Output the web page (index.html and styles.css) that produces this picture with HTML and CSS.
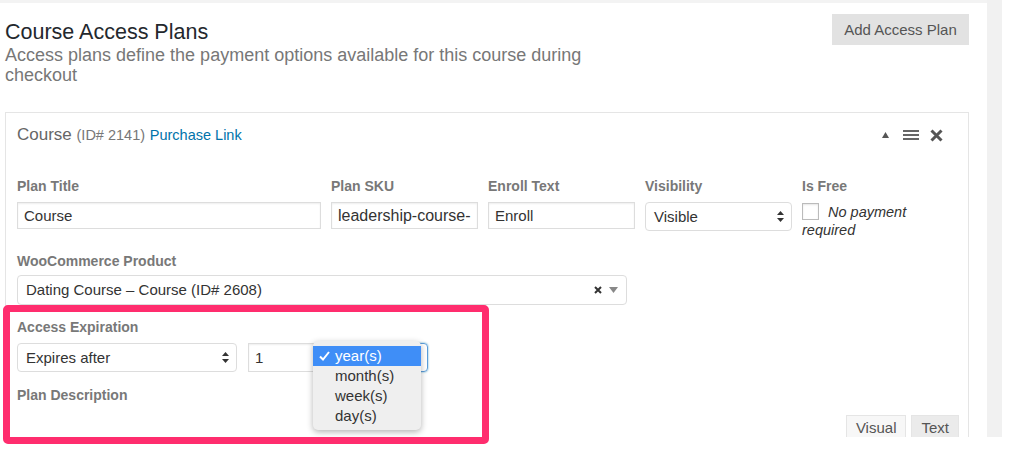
FILE: index.html
```html
<!DOCTYPE html>
<html lang="en">
<head>
    <meta charset="UTF-8">
    <meta name="viewport" content="width=device-width, initial-scale=1.0">
    <title>Course Access Plans</title>
    <link rel="stylesheet" href="styles.css">
</head>
<body>

<div class="page">
    <div class="main">
        <div class="top">
            <div class="intro">
                <h1>Course Access Plans</h1>
                <p>Access plans define the payment options available for this course during checkout</p>
            </div>
            <button class="add-btn">Add Access Plan</button>
        </div>

        <div class="plan">
            <div class="plan-head">
                <div class="plan-name">Course <small>(ID# 2141)</small> <a href="#">Purchase Link</a></div>
                <div class="plan-tools">
                    <svg class="tool-up" width="7" height="6" viewBox="0 0 7 6"><polygon points="0,6 3.5,0 7,6" fill="#555"/></svg>
                    <svg width="16" height="10" viewBox="0 0 16 10"><rect y="0" width="16" height="2" fill="#666"/><rect y="4" width="16" height="2" fill="#666"/><rect y="8" width="16" height="2" fill="#666"/></svg>
                    <svg width="13" height="13" viewBox="0 0 13 13"><path d="M1.5 1.5 L11.5 11.5 M11.5 1.5 L1.5 11.5" stroke="#555" stroke-width="3"/></svg>
                </div>
            </div>

            <div class="fields">
                <div class="field">
                    <label>Plan Title</label>
                    <div class="input">Course</div>
                </div>
                <div class="field">
                    <label>Plan SKU</label>
                    <div class="input sku">leadership-course-</div>
                </div>
                <div class="field">
                    <label>Enroll Text</label>
                    <div class="input">Enroll</div>
                </div>
                <div class="field">
                    <label>Visibility</label>
                    <div class="select">Visible
                        <svg class="updown" width="7" height="11" viewBox="0 0 7 11"><polygon points="0,4 3.5,0 7,4" fill="#333"/><polygon points="0,7 3.5,11 7,7" fill="#333"/></svg>
                    </div>
                </div>
                <div class="field">
                    <label>Is Free</label>
                    <div class="free"><span class="checkbox"></span><em>No payment required</em></div>
                </div>
            </div>

            <div class="field field-product">
                <label>WooCommerce Product</label>
                <div class="select product">Dating Course – Course (ID# 2608)
                    <span class="product-icons">
                        <svg width="8" height="8" viewBox="0 0 8 8"><path d="M1 1 L7 7 M7 1 L1 7" stroke="#333" stroke-width="2"/></svg>
                        <svg width="9" height="6" viewBox="0 0 9 6"><polygon points="0,0 9,0 4.5,6" fill="#888"/></svg>
                    </span>
                </div>
            </div>

            <div class="field field-expire">
                <label>Access Expiration</label>
                <div class="expire-row">
                    <div class="select expire-type">Expires after
                        <svg class="updown" width="7" height="11" viewBox="0 0 7 11"><polygon points="0,4 3.5,0 7,4" fill="#333"/><polygon points="0,7 3.5,11 7,7" fill="#333"/></svg>
                    </div>
                    <div class="input expire-num">1</div>
                    <div class="select expire-unit">
                        <svg class="updown" width="7" height="11" viewBox="0 0 7 11"><polygon points="0,4 3.5,0 7,4" fill="#333"/><polygon points="0,7 3.5,11 7,7" fill="#333"/></svg>
                    </div>
                </div>
            </div>

            <div class="field field-desc">
                <label>Plan Description</label>
                <div class="editor-tabs">
                    <button class="tab">Visual</button>
                    <button class="tab active">Text</button>
                </div>
                <div class="editor"></div>
            </div>
        </div>
    </div>
    <div class="rail"></div>
</div>

<!-- open dropdown of the unit select -->
<ul class="dropdown">
    <li class="picked">
        <svg class="check" width="11" height="10" viewBox="0 0 11 10"><path d="M1 5.5 L4 8.5 L10 1" stroke="#fff" stroke-width="2" fill="none"/></svg>year(s)
    </li>
    <li>month(s)</li>
    <li>week(s)</li>
    <li>day(s)</li>
</ul>

<!-- annotation box -->
<div class="mark"></div>

</body>
</html>
```

FILE: styles.css
```css
body {
    font-family: "Liberation Sans", Arial, sans-serif;
    margin: 0;
    background: #fff;
    color: #333;
}
.page {
    display: flex;
    height: 437px;
    overflow: hidden;
}
.main {
    width: 987px;
    border-top: 3px solid #f3f3f3;
}
.rail {
    width: 15px;
    background: #f1f1f1;
}
.top {
    display: flex;
    justify-content: space-between;
    align-items: flex-start;
    padding-left: 5px;
    margin-right: 18px;
}
.intro {
    width: 600px;
}
.intro h1 {
    font-size: 21.5px;
    font-weight: normal;
    line-height: 26px;
    color: #23282d;
    margin: 16px 0 0;
}
.intro p {
    font-size: 18px;
    line-height: 20px;
    color: #777;
    margin: 0;
}
.add-btn {
    margin-top: 11px;
    width: 137px;
    height: 31px;
    border: none;
    background: #e2e2e2;
    color: #555;
    font-family: inherit;
    font-size: 15px;
    padding: 0;
}
.plan {
    margin: 27px 18px 0 5px;
    border: 1px solid #e5e5e5;
    padding: 12px 10px 0 11px;
    height: 400px;
}
.plan-head {
    display: flex;
    justify-content: space-between;
    align-items: center;
    height: 20px;
}
.plan-name {
    font-size: 17px;
    line-height: 20px;
    color: #666;
}
.plan-name small {
    font-size: 14.5px;
    color: #777;
}
.plan-name a {
    font-size: 14.5px;
    color: #0073aa;
    text-decoration: none;
}
.plan-tools {
    display: flex;
    align-items: center;
    gap: 11px;
    margin-right: 15px;
}
.tool-up {
    margin-right: 3px;
}
.fields {
    display: grid;
    grid-template-columns: 304px 147px 147px 147px 1fr;
    column-gap: 10px;
    margin-top: 32px;
    margin-bottom: 13px;
}
.field label {
    display: block;
    font-size: 14px;
    font-weight: bold;
    line-height: 18px;
    color: #787878;
    margin-bottom: 7px;
}
.input {
    height: 25px;
    border: 1px solid #ddd;
    box-shadow: inset 0 1px 2px rgba(0, 0, 0, 0.07);
    font-size: 15px;
    line-height: 25px;
    padding: 0 6px;
    white-space: nowrap;
    overflow: hidden;
}
.sku {
    font-size: 16px;
}
.select {
    position: relative;
    height: 27px;
    border: 1px solid #ddd;
    border-radius: 4px;
    font-size: 15px;
    line-height: 27px;
    padding: 0 8px;
    white-space: nowrap;
}
.updown {
    position: absolute;
    right: 7px;
    top: 8px;
}
.free {
    font-size: 14.5px;
    line-height: 18px;
    padding-top: 1px;
}
.checkbox {
    float: left;
    width: 15px;
    height: 15px;
    border: 1px solid #bbb;
    margin: 0 9px 0 0;
    box-shadow: inset 0 1px 2px rgba(0, 0, 0, 0.1);
}
.field-product label {
    margin-bottom: 5px;
}
.product {
    width: 592px;
    height: 28px;
    line-height: 28px;
}
.product-icons {
    position: absolute;
    right: 8px;
    top: 0;
    bottom: 0;
    display: flex;
    align-items: center;
    gap: 7px;
}
.field-expire {
    margin-top: 13px;
}
.expire-row {
    display: flex;
    gap: 11px;
}
.expire-type {
    width: 202px;
}
.expire-num {
    width: 69px;
    height: 27px;
    line-height: 27px;
}
.expire-unit {
    width: 74px;
    border-color: #5b9dd9;
    box-shadow: 0 0 2px rgba(30, 140, 190, 0.8);
    margin-left: -6px;
}
.field-desc {
    margin-top: 14px;
}
.editor-tabs {
    display: flex;
    justify-content: flex-end;
    gap: 5px;
    margin: 11px -1px 0 0;
}
.tab {
    height: 24px;
    padding: 0 9px;
    border: 1px solid #e5e5e5;
    border-bottom: none;
    background: #f7f7f7;
    color: #555;
    font-family: inherit;
    font-size: 15px;
}
.tab.active {
    background: #ebebeb;
}
.editor {
    height: 120px;
    border: 1px solid #e5e5e5;
}
.dropdown {
    position: absolute;
    left: 313px;
    top: 341px;
    width: 108px;
    margin: 0;
    padding: 5px 0 4px;
    list-style: none;
    background: #efefef;
    border-radius: 5px;
    box-shadow: 0 2px 6px rgba(0, 0, 0, 0.3);
    font-size: 15px;
}
.dropdown li {
    height: 20px;
    line-height: 20px;
    padding-left: 22px;
    color: #333;
    position: relative;
}
.dropdown li.picked {
    background: #3f8ef7;
    color: #fff;
}
.check {
    position: absolute;
    left: 6px;
    top: 5px;
}
.mark {
    position: absolute;
    left: 3px;
    top: 305px;
    width: 472px;
    height: 125px;
    border: 7px solid #ff2d6e;
    border-radius: 5px;
}
```
